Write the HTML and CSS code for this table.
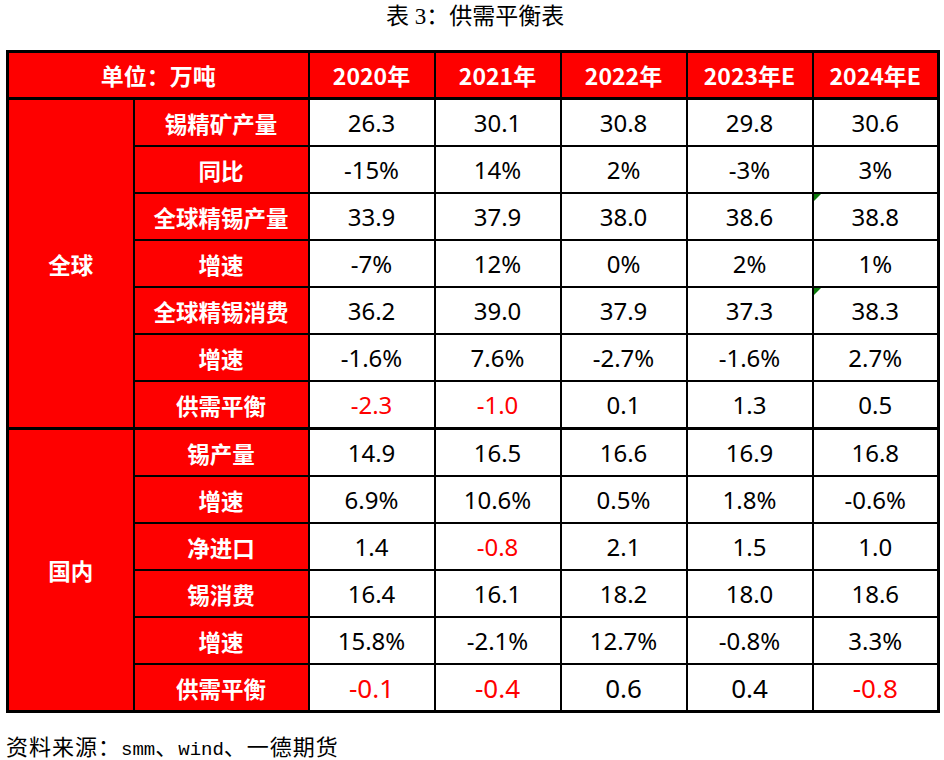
FILE: index.html
```html
<!DOCTYPE html>
<html lang="zh">
<head>
<meta charset="utf-8">
<title>供需平衡表</title>
<link rel="stylesheet" href="styles.css">
</head>
<body>
<div class="page">
  <h1 class="title">表 3：供需平衡表</h1>
  <table class="tbl">
    <colgroup>
      <col class="c-region"><col class="c-item"><col class="c-num"><col class="c-num"><col class="c-num"><col class="c-num"><col class="c-num">
    </colgroup>
    <thead>
      <tr><th colspan="2">单位：万吨</th><th>2020年</th><th>2021年</th><th>2022年</th><th>2023年E</th><th>2024年E</th></tr>
    </thead>
    <tbody class="grp">
      <tr><th class="region" rowspan="7">全球</th><th class="item">锡精矿产量</th><td>26.3</td><td>30.1</td><td>30.8</td><td>29.8</td><td>30.6</td></tr>
      <tr><th class="item">同比</th><td>-15%</td><td>14%</td><td>2%</td><td>-3%</td><td>3%</td></tr>
      <tr><th class="item">全球精锡产量</th><td>33.9</td><td>37.9</td><td>38.0</td><td>38.6</td><td class="flag">38.8</td></tr>
      <tr><th class="item">增速</th><td>-7%</td><td>12%</td><td>0%</td><td>2%</td><td>1%</td></tr>
      <tr><th class="item">全球精锡消费</th><td>36.2</td><td>39.0</td><td>37.9</td><td>37.3</td><td class="flag">38.3</td></tr>
      <tr><th class="item">增速</th><td>-1.6%</td><td>7.6%</td><td>-2.7%</td><td>-1.6%</td><td>2.7%</td></tr>
      <tr><th class="item">供需平衡</th><td class="neg">-2.3</td><td class="neg">-1.0</td><td>0.1</td><td>1.3</td><td>0.5</td></tr>
    </tbody>
    <tbody class="grp">
      <tr><th class="region" rowspan="6">国内</th><th class="item">锡产量</th><td>14.9</td><td>16.5</td><td>16.6</td><td>16.9</td><td>16.8</td></tr>
      <tr><th class="item">增速</th><td>6.9%</td><td>10.6%</td><td>0.5%</td><td>1.8%</td><td>-0.6%</td></tr>
      <tr><th class="item">净进口</th><td>1.4</td><td class="neg">-0.8</td><td>2.1</td><td>1.5</td><td>1.0</td></tr>
      <tr><th class="item">锡消费</th><td>16.4</td><td>16.1</td><td>18.2</td><td>18.0</td><td>18.6</td></tr>
      <tr><th class="item">增速</th><td>15.8%</td><td>-2.1%</td><td>12.7%</td><td>-0.8%</td><td>3.3%</td></tr>
      <tr class="big"><th class="item">供需平衡</th><td class="neg">-0.1</td><td class="neg">-0.4</td><td>0.6</td><td>0.4</td><td class="neg">-0.8</td></tr>
    </tbody>
  </table>
  <p class="source">资料来源：<span class="latin">smm</span>、<span class="latin">wind</span>、一德期货</p>
</div>
</body>
</html>
```
FILE: styles.css
```css
html, body {
  margin: 0;
  padding: 0;
  background: #ffffff;
}
.page {
  width: 944px;
  padding: 0 0 0 6px;
  box-sizing: border-box;
}
.title {
  margin: 0;
  height: 50px;
  padding-top: 2px;
  box-sizing: border-box;
  text-align: center;
  font-family: "Liberation Serif", "Noto Sans CJK SC", serif;
  font-weight: normal;
  font-size: 23px;
  line-height: 30px;
  color: #000;
}
.tbl {
  border-collapse: collapse;
  table-layout: fixed;
  width: 934px;
  border: 3px solid #000;
  font-family: "Noto Sans", "Noto Sans CJK SC", sans-serif;
}
.c-region { width: 126px; }
.c-item { width: 175px; }
.c-num { width: 126px; }
.tbl th, .tbl td {
  border: 2px solid #000;
  height: 45px;
  padding: 0;
  text-align: center;
  vertical-align: middle;
}
.tbl thead th {
  background: #fe0000;
  color: #fff;
  font-family: "Noto Sans CJK SC", sans-serif;
  font-weight: bold;
  font-size: 23px;
  height: 44px;
  border-bottom-width: 3px;
}
.tbl .region, .tbl .item {
  background: #fe0000;
  color: #fff;
  font-family: "Noto Sans CJK SC", sans-serif;
  font-weight: bold;
  font-size: 22.5px;
}
.tbl td {
  font-size: 24px;
  color: #000;
}
.grp {
  border-top: 3px solid #000;
}
.tbl td.neg {
  color: #ff0000;
}
.tbl .big td {
  font-size: 26px;
}
.tbl td.flag {
  position: relative;
}
.tbl td.flag::before {
  content: "";
  position: absolute;
  left: 0;
  top: 0;
  width: 0;
  height: 0;
  border-top: 7px solid #0b7a0b;
  border-right: 7px solid transparent;
}
.source {
  margin: 18px 0 0 0;
  font-family: "Noto Sans CJK SC", sans-serif;
  font-size: 22px;
  line-height: 28px;
  letter-spacing: 1px;
  color: #000;
}
.source .latin {
  font-family: "Liberation Mono", monospace;
  font-size: 19px;
  letter-spacing: 0;
}
```
